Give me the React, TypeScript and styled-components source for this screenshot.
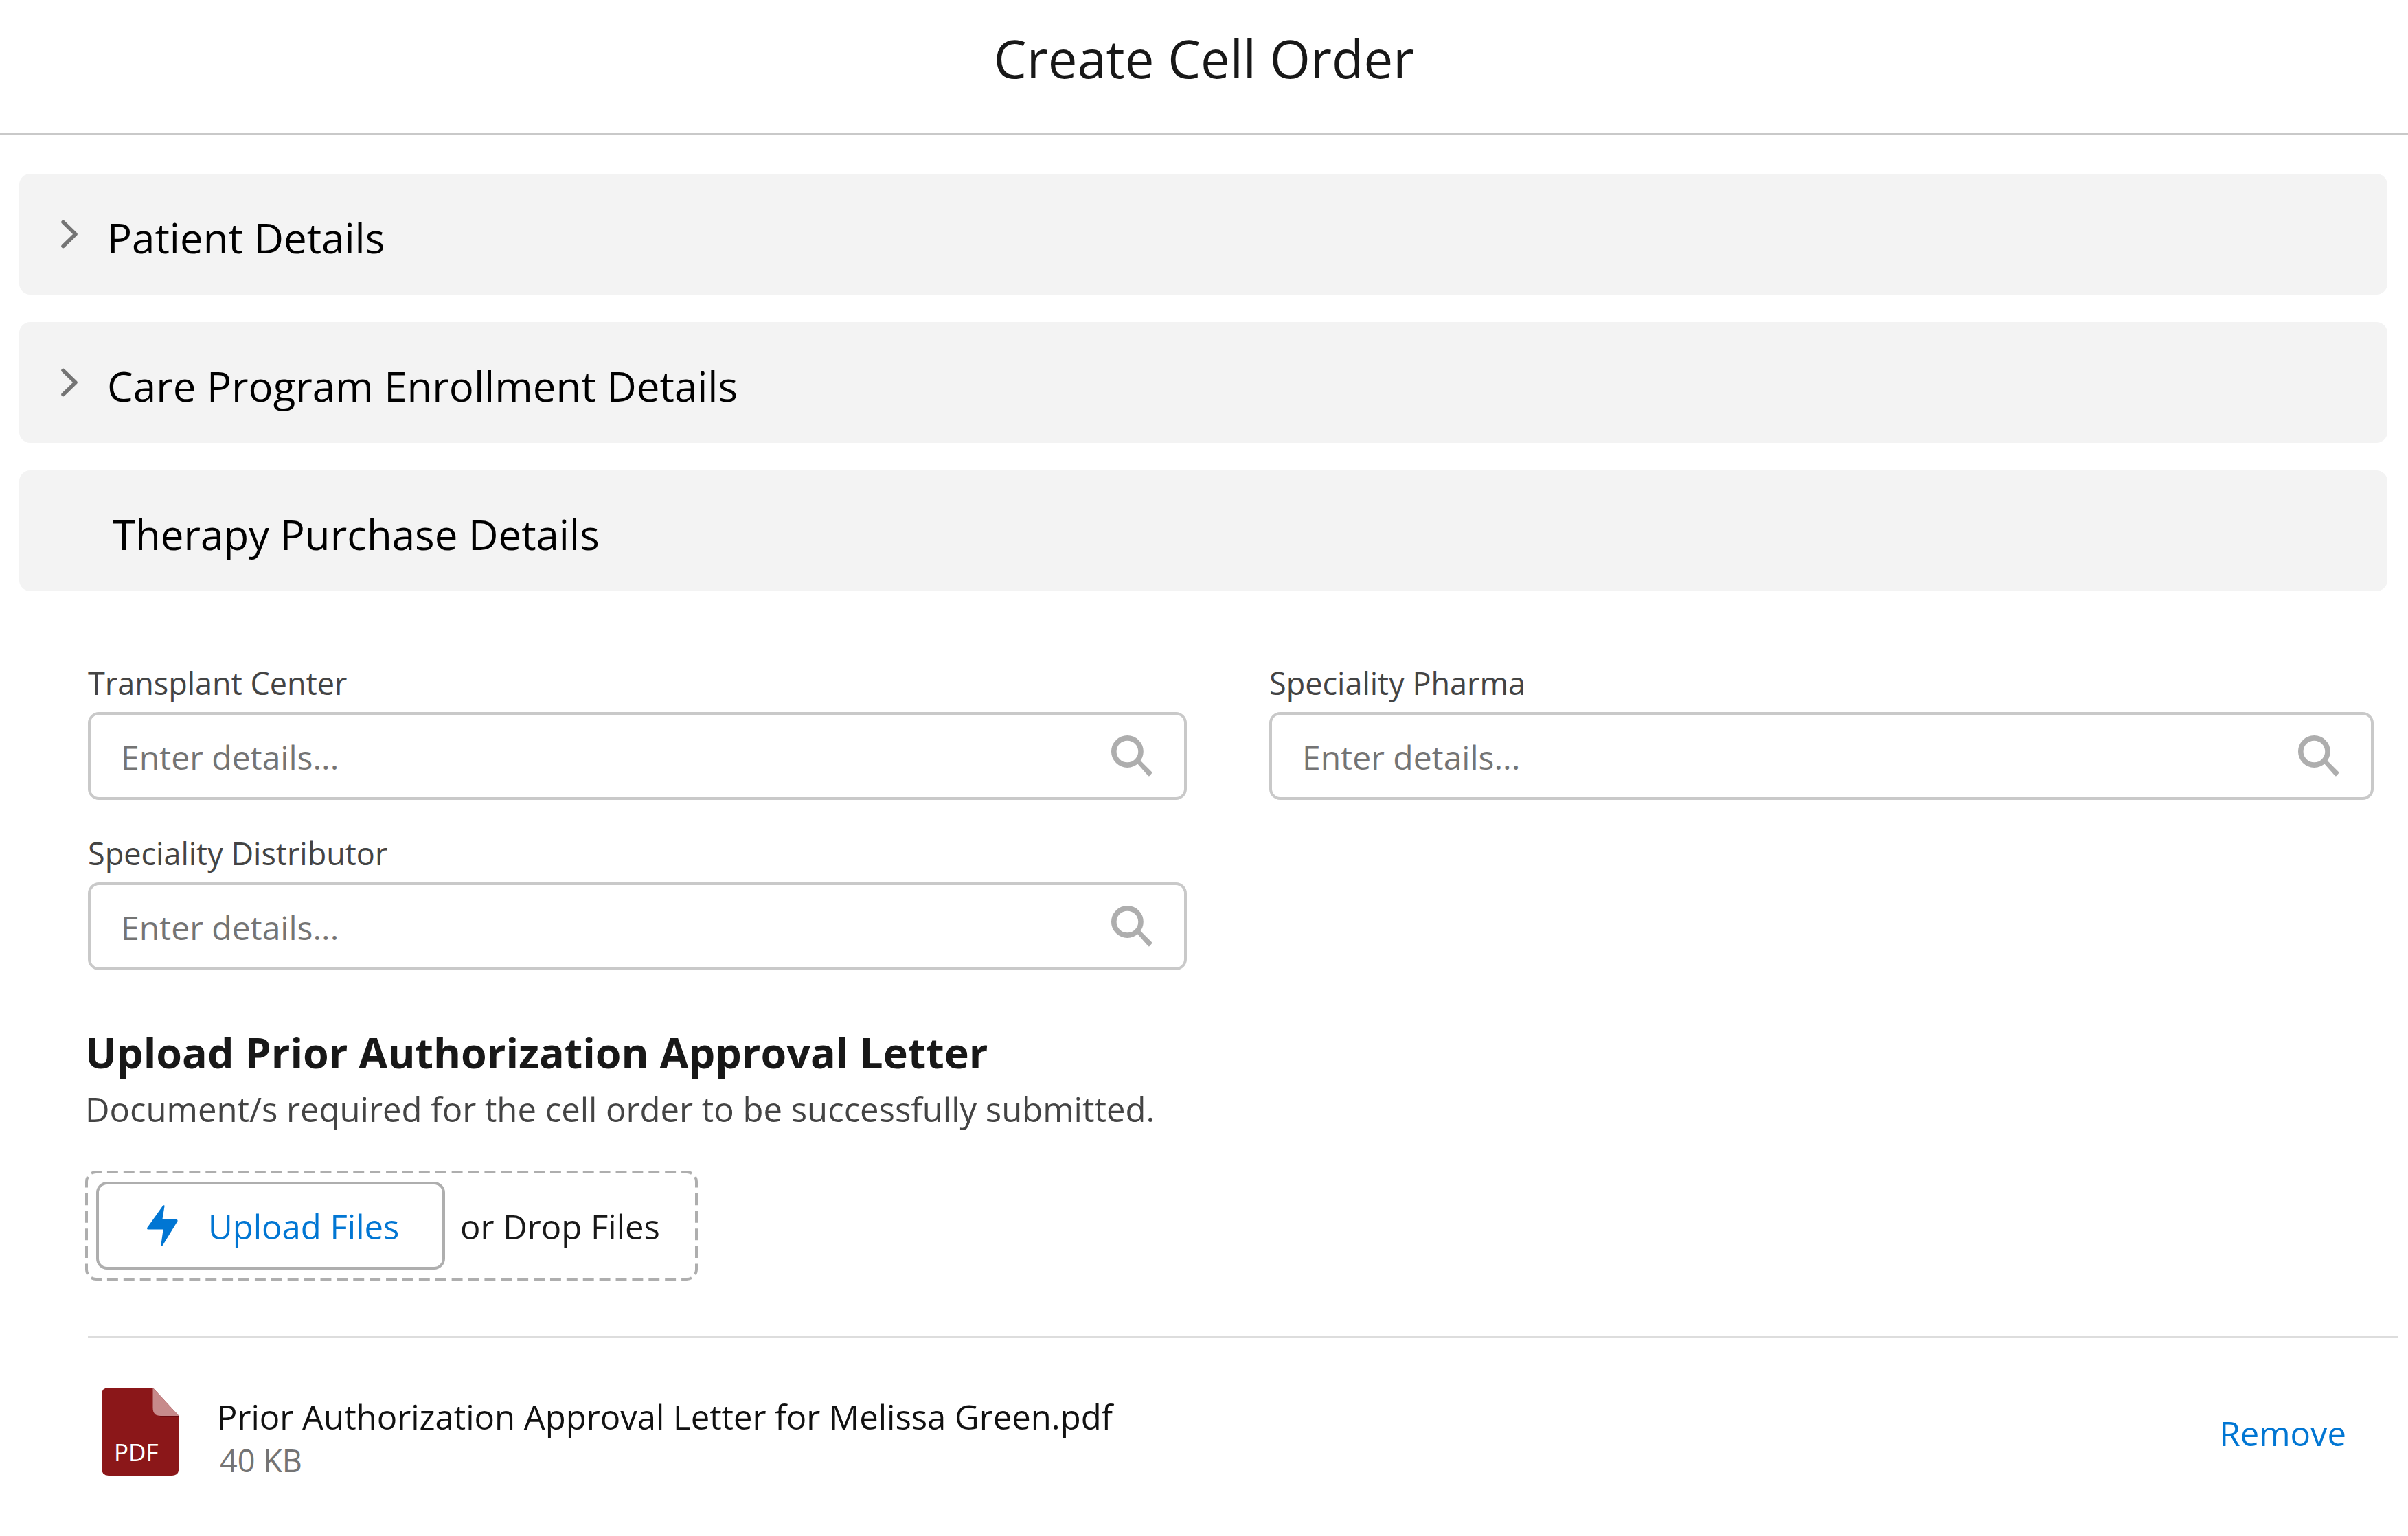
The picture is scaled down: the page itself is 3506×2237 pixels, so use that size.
import React, { useId, useState } from "react";
import styled, { createGlobalStyle } from "styled-components";

const GlobalStyle = createGlobalStyle`
  *, *::before, *::after { box-sizing: border-box; }
  body { margin: 0; background: #fff; }
  body, button, input { font-family: "Open Sans", "Noto Sans", sans-serif; }
`;

const Header = styled.header`
  padding: 35px 0 58px;
  border-bottom: 4px solid #c9c9c9;
`;

const PageTitle = styled.h1`
  margin: 0;
  font-size: 76px;
  line-height: 100px;
  font-weight: 400;
  text-align: center;
  color: #181818;
`;

const Sections = styled.div`
  display: flex;
  flex-direction: column;
  gap: 40px;
  padding: 56px 30px 0 28px;
`;

const SectionBar = styled.button`
  display: flex;
  align-items: center;
  gap: 42px;
  width: 100%;
  height: 176px;
  padding: 0 60px;
  border: 0;
  border-radius: 16px;
  background: #f3f3f3;
  text-align: left;
  cursor: pointer;
`;

const SectionTitle = styled.span<{ $indent?: boolean }>`
  padding: 10px 0 0 ${(p) => (p.$indent ? "76px" : "0")};
  font-size: 60px;
  line-height: 80px;
  color: #000;
`;

const Fields = styled.div`
  display: grid;
  grid-template-columns: 200fr 201fr;
  gap: 48px 120px;
  padding: 104px 50px 0 128px;
`;

const FieldBox = styled.div`
  display: flex;
  flex-direction: column;
  gap: 12px;
`;

const FieldLabel = styled.label`
  font-size: 45px;
  line-height: 60px;
  color: #444;
`;

const InputFrame = styled.div`
  display: flex;
  align-items: center;
  height: 128px;
  padding-right: 46px;
  border: 4px solid #c9c9c9;
  border-radius: 16px;
  background: #fff;
`;

const TextInput = styled.input`
  flex: 1;
  min-width: 0;
  height: 100%;
  padding: 2px 24px 0 44px;
  border: 0;
  outline: 0;
  background: transparent;
  font-size: 48px;
  color: #181818;
  &::placeholder { color: #747474; opacity: 1; }
`;

const Upload = styled.section`
  padding: 80px 50px 0 124px;
`;

const UploadTitle = styled.h2`
  margin: 0 0 12px;
  font-size: 61px;
  line-height: 80px;
  font-weight: 700;
  color: #181818;
`;

const UploadHint = styled.p`
  margin: 0 0 60px;
  font-size: 49px;
  line-height: 60px;
  color: #444;
`;

const DropZone = styled.div`
  position: relative;
  display: inline-flex;
  align-items: center;
  gap: 22px;
  min-width: 892px;
  height: 160px;
  padding: 0 50px 0 16px;
  vertical-align: top;
`;

const DashedOutline = styled.svg`
  position: absolute;
  inset: 0;
  width: 100%;
  height: 100%;
  pointer-events: none;
`;

const UploadButton = styled.button`
  display: flex;
  align-items: center;
  gap: 44px;
  min-width: 508px;
  height: 128px;
  padding: 0 56px 0 70px;
  border: 4px solid #aeaeae;
  border-radius: 16px;
  background: #fff;
  color: #0176d3;
  cursor: pointer;
`;

const ControlText = styled.span<{ $dark?: boolean }>`
  padding-top: 2px;
  font-size: 49px;
  line-height: 60px;
  white-space: nowrap;
  color: ${(p) => (p.$dark ? "#181818" : "inherit")};
`;

const FileList = styled.ul`
  list-style: none;
  margin: 80px 14px 0 128px;
  padding: 0;
  border-top: 4px solid #ddd;
`;

const FileRow = styled.li`
  display: flex;
  align-items: flex-start;
  padding: 72px 76px 72px 20px;
`;

const FileInfo = styled.div`
  display: flex;
  flex: 1;
  flex-direction: column;
  gap: 4px;
  padding: 12px 0 0 55px;
`;

const FileName = styled.span`
  font-size: 49px;
  line-height: 60px;
  color: #111;
`;

const FileSize = styled.span`
  padding-left: 4px;
  font-size: 45px;
  line-height: 60px;
  color: #747474;
`;

const RemoveButton = styled.button`
  margin: 36px 0 0;
  padding: 0;
  border: 0;
  background: none;
  font-size: 49px;
  line-height: 60px;
  color: #0176d3;
  cursor: pointer;
`;

function Chevron() {
  return (
    <svg width="26" height="42" viewBox="0 0 26 42" fill="none" aria-hidden="true">
      <path d="M4 3.5L22 21L4 38.5" stroke="#747474" strokeWidth="5.5" strokeLinecap="round" strokeLinejoin="round" />
    </svg>
  );
}

function SearchIcon() {
  return (
    <svg width="60" height="60" viewBox="0 0 60 60" fill="none" aria-hidden="true">
      <circle cx="23.4" cy="23.5" r="19.6" stroke="#aeaeae" strokeWidth="7.6" />
      <path d="M37.5 40.5L42.3 36.4L59 53.2Q60 54.2 59 55.2L56 58.8Q55 60 53.8 59Z" fill="#aeaeae" />
    </svg>
  );
}

function BoltIcon() {
  return (
    <svg width="45" height="60" viewBox="0 0 45 60" fill="#0176d3" aria-hidden="true">
      <path d="M25.6 1.2C25.8 0 23.9 -0.3 23.1 1L0.6 32.6C-0.5 34.2 0.3 35.6 2 35.6H23.6L20.4 58C20.2 60 22 60 23 58.6L44.2 24C45 22.4 44.4 21 42.8 21H22.4Z" />
    </svg>
  );
}

function PdfIcon() {
  return (
    <svg width="113" height="128" viewBox="0 0 113 128" role="img" aria-label="PDF file">
      <path d="M10 0H74.5L112.5 41V117.5Q112.5 128 102.5 128H10Q0 128 0 117.5V10Q0 0 10 0Z" fill="#8b1719" />
      <path d="M84 41H112.5V43H90Q86 43 84 41Z" fill="#6d0a10" />
      <path d="M74.5 0L112.5 41H86Q74.5 41 74.5 29.5Z" fill="#c78a8b" />
      <text x="18" y="107" fontSize="35" fontFamily="Open Sans, Noto Sans, sans-serif" fill="#fff">PDF</text>
    </svg>
  );
}

/* Long dashes on each side; every corner is two half dashes with a gap between. */
function DropOutline() {
  return (
    <DashedOutline viewBox="0 0 892 160" preserveAspectRatio="none" fill="none" stroke="#aeaeae" strokeWidth="4" aria-hidden="true">
      <path d="M16 2H876M16 158H876" strokeDasharray="15.93 7.96" strokeDashoffset="7.96" />
      <path d="M2 16V144M890 16V144" strokeDasharray="17.07 8.53" strokeDashoffset="8.53" />
      <path d="M2 16A14 14 0 0 1 16 2M876 2A14 14 0 0 1 890 16M890 144A14 14 0 0 1 876 158M16 158A14 14 0 0 1 2 144" strokeDasharray="7.5 7 7.5 0" />
    </DashedOutline>
  );
}

function Section({ title, collapsible = true }: { title: string; collapsible?: boolean }) {
  return (
    <SectionBar type="button" aria-expanded={!collapsible}>
      {collapsible && <Chevron />}
      <SectionTitle $indent={!collapsible}>{title}</SectionTitle>
    </SectionBar>
  );
}

function LookupField({ label }: { label: string }) {
  const id = useId();
  const [value, setValue] = useState("");
  return (
    <FieldBox>
      <FieldLabel htmlFor={id}>{label}</FieldLabel>
      <InputFrame>
        <TextInput
          id={id}
          type="text"
          placeholder="Enter details..."
          value={value}
          onChange={(e) => setValue(e.target.value)}
        />
        <SearchIcon />
      </InputFrame>
    </FieldBox>
  );
}

export default function App() {
  return (
    <>
      <GlobalStyle />
      <Header>
        <PageTitle>Create Cell Order</PageTitle>
      </Header>
      <main>
        <Sections>
          <Section title="Patient Details" />
          <Section title="Care Program Enrollment Details" />
          <Section title="Therapy Purchase Details" collapsible={false} />
        </Sections>
        <Fields>
          <LookupField label="Transplant Center" />
          <LookupField label="Speciality Pharma" />
          <LookupField label="Speciality Distributor" />
        </Fields>
        <Upload>
          <UploadTitle>Upload Prior Authorization Approval Letter</UploadTitle>
          <UploadHint>Document/s required for the cell order to be successfully submitted.</UploadHint>
          <DropZone>
            <DropOutline />
            <UploadButton type="button">
              <BoltIcon />
              <ControlText>Upload Files</ControlText>
            </UploadButton>
            <ControlText $dark>or Drop Files</ControlText>
          </DropZone>
        </Upload>
        <FileList>
          <FileRow>
            <PdfIcon />
            <FileInfo>
              <FileName>Prior Authorization Approval Letter for Melissa Green.pdf</FileName>
              <FileSize>40 KB</FileSize>
            </FileInfo>
            <RemoveButton type="button">Remove</RemoveButton>
          </FileRow>
        </FileList>
      </main>
    </>
  );
}
